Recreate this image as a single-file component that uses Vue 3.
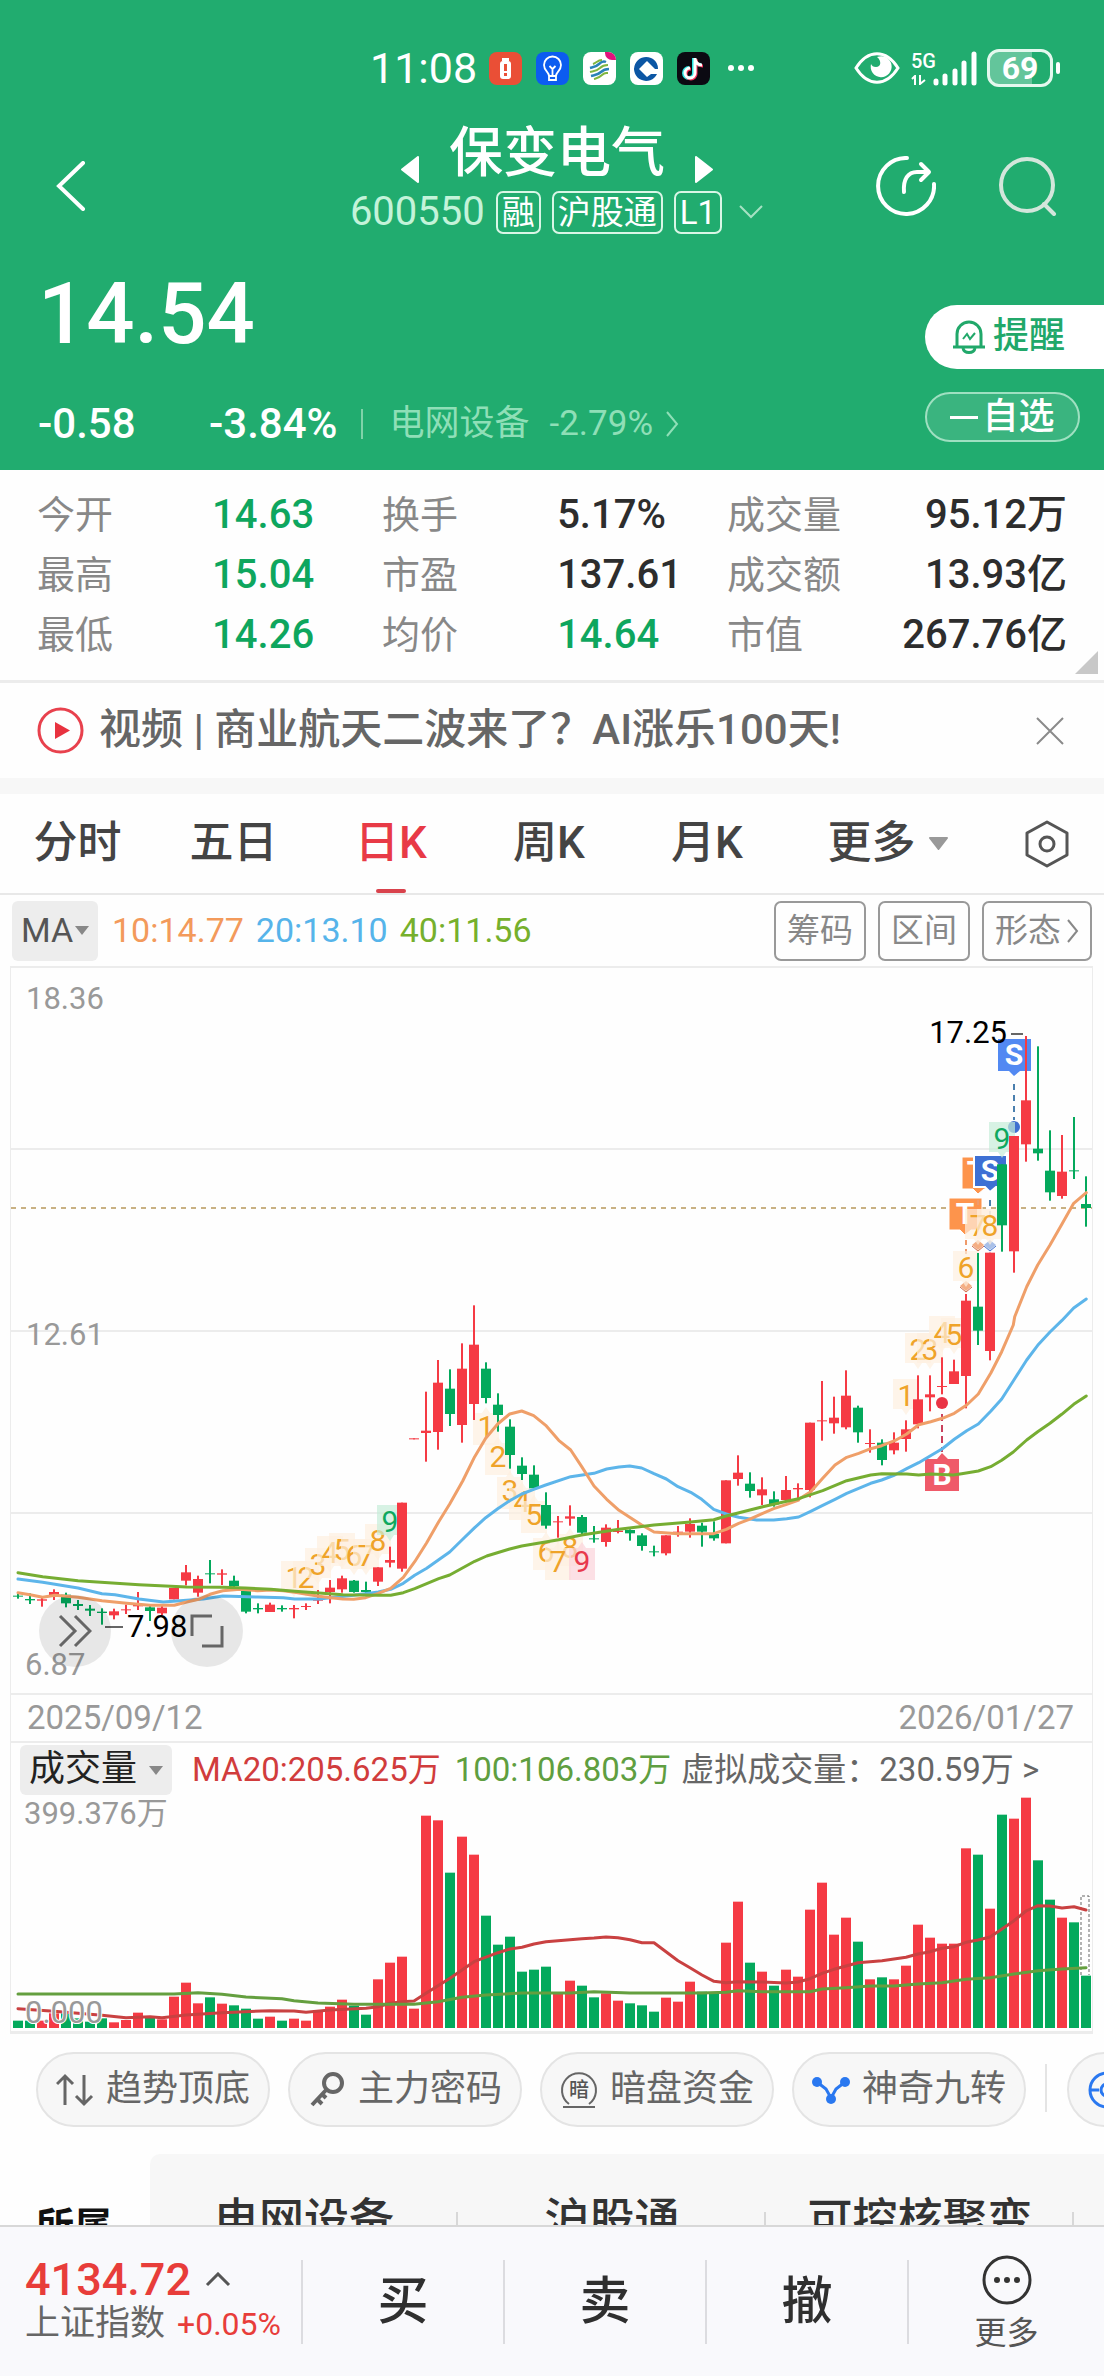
<script setup>
const stats = [
  [['今开', '14.63', 'down'], ['换手', '5.17%', ''], ['成交量', '95.12万', '']],
  [['最高', '15.04', 'down'], ['市盈', '137.61', ''], ['成交额', '13.93亿', '']],
  [['最低', '14.26', 'down'], ['均价', '14.64', 'down'], ['市值', '267.76亿', '']],
]
const periods = ['分时', '五日', '日K', '周K', '月K']
const activePeriod = '日K'
const concepts = ['电网设备', '沪股通', '可控核聚变']
const trades = ['买', '卖', '撤']

// Candles: colour, high, body top, body bottom, low.
// Values are thirds of a chart unit, counted down from each group's base line.
const groups = [
  [1260, `g 1000 1007 1010 1016,g 1000 1017 1021 1032,r 1010 1018 1022 1040,r 988 996 1005 1020,g 998 1004 1030 1042,g 1020 1032 1038 1050,g 1035 1046 1052 1068,g 1045 1055 1059 1094,r 1046 1054 1066 1078,r 1034 1048 1051 1062,r 996 1035 1039 1050,g 1038 1042 1053 1083,r 1035 1043 1060 1066,r 984 984 1018 1018,r 915 937 962 976,r 947 957 998 1010,g 900 940 943 970,r 928 940 944 975,g 947 962 978 985,g 993 993 1055 1060,g 1030 1044 1048 1060,r 1028 1034 1056 1056,g 1036 1044 1048 1055,r 1035 1044 1048 1075,r 1030 1038 1041 1050,r 990 1014 1022 1032,r 960 983 996 1030,r 947 955 988 998,g 960 962 996 998,g 965 990 996 1000,r 922 922 965 978,r 860 900 908 922,r 728 728 926 935,r 535 535 538 538,r 395 512 519 605,r 300 368 516 569,g 328 386 462 498,r 250 326 495 548,r 136 254 432 480,g 307 326 414 430,g 400 434 465 515,g 478 500 585 626,g 592 617 642 660,g 616 644 685 685,g 697 735 797 806,r 768 784 787 833,r 736 769 776 797,g 765 771 818 828,g 798 835 838 848,r 793 803 846 860,r 780 812 816 820,g 808 810 820 842,g 820 826 858 872,g 857 874 877 889,r 826 826 880 886,r 798 815 818 830,r 775 792 815 833,g 788 797 815 860,g 784 822 835 842,r 661 661 850 850,r 586 638 657 677,g 637 671 693 713,r 652 688 706 735,g 694 718 733 740`],
  [1300, `r 528 570 600 602,r 550 564 568 595,r 368 368 570 592,r 243 361 364 422,r 290 353 370 401,r 211 287 382 388,g 317 323 397 428,r 388 429 432 458,g 418 428 480 496,r 397 428 451 463,r 361 388 417 455,r 226 298 373 385,r 226 283 292 334,r 172 258 261 283,r 179 214 252 252,r -18 2 228 325,g -141 20 92 135,r -142 -142 153 181`],
  [980, `g 553 553 736 815,r 468 468 814 878,r 168 361 493 545,g 199 506 520 542,g 451 572 637 662,r 465 575 648 656,g 411 571 574 597,g 589 672 684 740`],
]
const candles = groups
  .flatMap(([base, rows]) => rows.split(',').map((row) => {
    const [c, ...v] = row.split(' ')
    const [high, top, bottom, low] = v.map((n) => base + n / 3)
    return { c, high, top, bottom, low }
  }))
  .map((k, i) => ({ ...k, x: 18 + i * 12 }))

const line = (offset, base, pts) =>
  pts.split(' ').map((p) => {
    const [x, y] = p.split(',')
    return `${(offset + x / 3).toFixed(1)},${(base + y / 3).toFixed(1)}`
  })
const averages = [
  {
    name: 'ma20', pts: [
      ...line(0, 1260, '54,957 128,967 234,984 306,1001 345,1004 417,1017 490,1026 560,1021 610,1017 668,1008 773,1011 850,1013 884,1017 957,1017 1061,1006 1135,996 1172,988'),
      ...line(400, 1260, '10,970 44,946 80,925 116,899 149,876 188,838 224,803 257,773 293,746 329,722 365,702 401,688 437,675 512,650 582,640 620,627 657,621 689,618 725,624 762,641 799,657 834,680 872,697 905,718 941,748 979,762 1016,772 1070,780 1121,780 1160,776'),
      ...line(780, 1300, '20,656 56,651 92,634 128,616 165,598 200,580 272,550 305,540 344,525 380,506 416,488 487,446 523,418 560,392 595,372 632,334 665,297 704,236 740,180 773,136 810,96 845,62 881,24 919,-3'),
    ],
  },
  {
    name: 'ma10', pts: [
      ...line(0, 1260, '54,998 90,1004 128,1012 165,1006 234,1012 306,1022 380,1030 450,1036 523,1036 560,1026 596,1018 630,1003 668,992 720,988 773,992 812,990 850,992 884,997 920,1003 957,1009 992,1013 1029,1017 1061,1018 1097,1013 1135,1000 1172,985'),
      ...line(400, 1260, '10,952 44,905 80,848 116,785 149,732 188,663 224,590 257,535 293,492 329,462 365,453 401,467 437,496 476,541 512,570 545,620 582,678 620,718 657,751 689,772 725,795 762,816 834,821 941,821 979,808 1016,790 1048,778 1088,760 1121,746 1160,733 1196,720'),
      ...line(780, 1300, '56,598 92,575 128,535 165,495 200,472 236,460 272,446 305,437 344,422 380,402 416,374 452,365 487,355 523,340 560,315 595,282 632,220 665,155 700,75'),
      ...line(780, 980, '704,1010 740,920 773,855 810,795 848,728 881,670 919,638'),
    ],
  },
  {
    name: 'ma40', pts: [
      ...line(0, 1260, '54,938 128,950 234,962 417,974 560,981 668,982 736,984 812,988 884,994 957,999 1029,1004 1135,1006 1172,1006'),
      ...line(400, 1260, '10,998 44,986 116,956 149,945 224,904 260,888 329,867 365,858 476,839 545,825 657,808 762,795 872,786 941,779 979,768 1088,740 1160,724'),
      ...line(780, 1300, '20,604 56,596 128,572 200,542 272,525 305,521 380,522 416,525 452,522 520,525 545,521 595,513 632,500 665,481 700,456 740,420 773,395 810,370 845,343 881,313 919,288'),
    ],
  },
].map((a) => ({ ...a, pts: a.pts.join(' ') }))

// Nine-turn counters: candle index, digit, baseline, side of the candle, tone
const counts = [
  [23, 1, 1588, 'up'], [24, 2, 1588, 'up'], [25, 3, 1575, 'up'], [26, 4, 1563, 'up'], [27, 5, 1560, 'up'],
  [28, 6, 1566, 'up'], [29, 7, 1566, 'up'], [30, 8, 1551, 'up'], [31, 9, 1532, 'up', 'sell'],
  [39, 1, 1437, 'low'], [40, 2, 1467, 'low'], [41, 3, 1501, 'low'], [42, 4, 1512, 'low'], [43, 5, 1525, 'low'],
  [44, 6, 1562, 'low'], [46, 8, 1558, 'low'], [45, 7, 1572, 'low'], [47, 9, 1572, 'low', 'buy'],
  [74, 1, 1406, 'up'], [75, 2, 1360, 'up'], [76, 3, 1360, 'up'], [77, 4, 1343, 'up'], [78, 5, 1345, 'up'],
  [79, 6, 1278, 'up'], [80, 7, 1236, 'up'], [81, 8, 1236, 'up'], [82, 9, 1149, 'up', 'sell'],
].map(([i, n, y, side, tone = 'run']) => ({ x: 18 + i * 12, n, y, side, tone }))
const countBox = ({ x, y, side }) => side === 'up'
  ? `M${x - 13} ${y - 27}h26v30h-9l-4 6l-4-6h-9z`
  : `M${x - 13} ${y + 8}v-32h9l4-6l4 6h9v32z`

const volumes = `g902 g902 r902 r880 g880 g895 g905 g895 r907 r900 r878 g890 r898 r830 r788 r850 g832 r851 g856 g866 g896 r890 g902 r896 r902 r875 r860 r839 g857 g884 r778 r728 r710 r866 r287 r301 g458 r350 r404 g587 g674 g650 g755 g749 g740 r820 r782 g797 g832 r820 r842 g850 g856 g875 r833 r845 r785 g815 g822 r668 r545 g728 r755 g797 r749 r770 r569 r488 r644 r593 g665 r778 g772 r778 r737 r614 r653 r671 r671 r385 g404 r566 g284 r296 r233 g421 g539 r593 g607 g767`
  .split(' ')
  .map((v, i) => ({ c: v[0], x: 18 + i * 12, y: 1720 + v.slice(1) / 3 }))
const volLine = (pts) => pts.split(' ').map((p) => {
  const [i, y] = p.split(',')
  return `${18 + i * 12},${(1720 + y / 3).toFixed(1)}`
}).join(' ')
const vol20 = volLine('0,866 3,874 7,886 9,893 11,890 12,893 14,885 17,878 21,872 23,873 24,877 26,870 29,865 30,860 31,850 32,845 33,843 34,820 36,775 38,725 40,698 41,687 42,682 43,672 44,665 46,659 47,656 48,654 49,651 50,653 51,659 52,668 53,668 54,695 55,722 56,743 57,765 58,784 59,788 60,785 62,786 64,789 65,786 66,776 67,760 68,748 69,738 70,728 72,722 73,717 74,712 75,702 76,695 77,685 78,680 79,667 80,660 81,651 82,627 83,602 84,573 85,557 86,558 87,564 88,560 89,570')
const vol100 = volLine('0,822 13,822 15,818 17,823 19,831 22,836 23,842 25,849 28,853 31,853 33,853 35,845 37,832 39,825 42,819 46,819 48,815 51,819 57,819 59,817 60,812 62,815 66,815 67,807 69,803 71,798 73,798 75,792 77,788 79,778 81,773 83,762 85,752 87,747 89,743')
</script>

<template>
  <div class="app">
    <header class="hero">
      <div class="status">
        <span class="clock">11:08</span>
        <div class="apps">
          <svg viewBox="0 0 33 33"><rect width="33" height="33" rx="8" fill="#ea4f36" /><rect x="13" y="6" width="7" height="3" fill="#fff" /><rect x="11" y="9" width="11" height="18" rx="3" fill="#fff" /><path d="M16.500 12v7M16.500 21v3" stroke="#ea4f36" stroke-width="3" /></svg>
          <svg viewBox="0 0 33 33"><rect width="33" height="33" rx="8" fill="#0c5cf0" /><path d="M13 24c0-4-5-5-5-11a8.500 8.500 0 0 1 17 0c0 6-5 7-5 11zM13 24v4h7v-4M16.500 23v-6l-3-3M16.500 17l3-3" fill="none" stroke="#fff" stroke-width="1.800" /></svg>
          <svg viewBox="0 0 33 33"><rect width="33" height="33" rx="8" fill="#fff" /><path d="M7 16c4-1 6-1 9-4s5-3 7-2M8 24c4-1 7-1 10-4s5-3 8-3" fill="none" stroke="#2a82b8" stroke-width="2.500" /><path d="M7 20c4-1 7-1 10-4s5-3 8-3M11 27c4-1 5-1 8-4s4-2 6-2M10 12c3-1 5-4 9-4" fill="none" stroke="#7fb53f" stroke-width="2" /><path d="M22 0h3a8 8 0 0 1 8 8h-4a7 7 0 0 1-7-7z" fill="#e3107c" /></svg>
          <svg viewBox="0 0 33 33"><rect width="33" height="33" rx="8" fill="#fff" /><path d="M21 6A12 12 0 1 0 27 22h-6l-4 3-8-8 8-8 8 8h3a12 12 0 0 0-5-10z" fill="#0b56a4" /><path d="M16.500 10l6 6.500-6 6.500-6-6.500z" fill="#fff" /></svg>
          <svg viewBox="0 0 33 33"><rect width="33" height="33" rx="8" fill="#0b0a12" /><path d="M17 6v15a5 5 0 1 1-5-5M17 7c1 4 3 6 7 6" fill="none" stroke="#2fe6e6" stroke-width="4" /><path d="M19 7v15a5 5 0 1 1-5-5M19 8c1 4 3 6 7 6" fill="none" stroke="#f4335c" stroke-width="3" /><path d="M18 6v15a5 5 0 1 1-5-5M18 7c1 4 3 6 7 6" fill="none" stroke="#fff" stroke-width="3" /></svg>
          <svg class="dots" viewBox="0 0 28 8"><circle cx="4" cy="4" r="3" /><circle cx="14" cy="4" r="3" /><circle cx="24" cy="4" r="3" /></svg>
        </div>
        <div class="signal">
          <svg width="46" height="36" viewBox="0 0 46 36"><path d="M2 18C14-1 32-1 44 18 32 37 14 37 2 18z" fill="none" stroke="#fff" stroke-width="3" /><path d="M23 7c5 4 4 10-1 10-3 0-4-1-5-3a10.500 10.500 0 1 0 6-7z" fill="#fff" /></svg>
          <div class="net"><b>5G</b><svg width="15" height="10" viewBox="0 0 15 10"><path d="M1 4l3-3v9M9 0v9l5-4" fill="none" stroke="#fff" stroke-width="2" /></svg></div>
          <svg width="46" height="40" viewBox="0 0 46 40"><path d="M4 35v-2M13 35v-7M23 35V23M32 35V15M42 35V6" stroke="#fff" stroke-width="5" stroke-linecap="round" /></svg>
          <div class="battery">69</div>
        </div>
      </div>

      <nav class="nav">
        <button class="plain" aria-label="返回"><svg width="30" height="50" viewBox="0 0 30 50"><path d="M27 2L3 25l24 23" fill="none" stroke="#fff" stroke-width="4" stroke-linecap="round" /></svg></button>
        <div class="stock">
          <div class="name">
            <button class="plain" aria-label="上一只"><svg width="18" height="27" viewBox="0 0 18 27"><path d="M17 1v25L1 13.500z" fill="#fff" stroke="#fff" stroke-width="2" stroke-linejoin="round" /></svg></button>
            <h1>保变电气</h1>
            <button class="plain" aria-label="下一只"><svg width="18" height="27" viewBox="0 0 18 27"><path d="M1 1v25l16-12.500z" fill="#fff" stroke="#fff" stroke-width="2" stroke-linejoin="round" /></svg></button>
          </div>
          <div class="code">
            <span class="num">600550</span><span class="badge">融</span><span class="badge">沪股通</span><span class="badge">L1</span>
            <svg width="26" height="16" viewBox="0 0 26 16"><path d="M2 2l11 11L24 2" fill="none" stroke="#a6e2c3" stroke-width="2" /></svg>
          </div>
        </div>
        <div class="actions">
          <button class="plain" aria-label="分享"><svg width="60" height="60" viewBox="0 0 60 60"><g fill="none" stroke="#fff" stroke-width="4" stroke-linecap="round" stroke-linejoin="round"><path d="M31 2a28 28 0 1 0 27 26" /><path d="M28 36c-1-13 4-20 13-20h11M45 8l8 8-8 8" /></g></svg></button>
          <button class="plain" aria-label="搜索"><svg width="60" height="60" viewBox="0 0 60 60"><g fill="none" stroke="#d3e6db" stroke-width="4"><circle cx="29" cy="29" r="26" /><path d="M46 48l10 10" stroke-linecap="round" /></g></svg></button>
        </div>
      </nav>

      <div class="quote">
        <div class="figures">
          <div class="price">14.54</div>
          <div class="change">
            <span class="delta">-0.58</span><span class="rate">-3.84%</span>
            <a class="sector" href="#sector"><span>电网设备</span><span class="pct">-2.79%</span><svg width="14" height="26" viewBox="0 0 14 26"><path d="M2 1l10 12L2 25" fill="none" stroke="#8fdfb7" stroke-width="2" /></svg></a>
          </div>
        </div>
        <div class="side">
          <button class="remind"><svg width="34" height="36" viewBox="0 0 34 36"><g fill="none" stroke="#21a86a" stroke-width="3"><path d="M5 27V15a12 12 0 0 1 24 0v12M1 28h32" /><path d="M11 29c1 6 11 6 12 0" /><path d="M11 20l4-5 3 5 5-6" stroke-width="2" /></g></svg>提醒</button>
          <button class="watch"><i></i>自选</button>
        </div>
      </div>
    </header>

    <section class="stats">
      <table>
        <tbody>
          <tr v-for="(row, r) in stats" :key="r">
            <template v-for="[label, value, tone] in row" :key="label"><th scope="row">{{ label }}</th><td :class="tone">{{ value }}</td></template>
          </tr>
        </tbody>
      </table>
      <svg class="corner" width="23" height="23" viewBox="0 0 23 23"><path d="M23 0v23H0z" fill="#c8c8c8" /></svg>
    </section>

    <section class="news">
      <svg width="47" height="47" viewBox="0 0 47 47"><circle cx="23.500" cy="23.500" r="21.500" fill="none" stroke="#e8414d" stroke-width="3" /><path d="M18 15v17l15-8.500z" fill="#e8323f" /></svg>
      <a href="#news">视频 | 商业航天二波来了？AI涨乐100天!</a>
      <button class="plain" aria-label="关闭"><svg width="28" height="28" viewBox="0 0 28 28"><path d="M1 1l26 26M27 1L1 27" stroke="#8a8a8a" stroke-width="2" /></svg></button>
    </section>

    <nav class="tabs">
      <button v-for="p in periods" :key="p" :class="{ on: p === activePeriod }">{{ p }}</button>
      <button>更多<svg width="21" height="13" viewBox="0 0 21 13"><path d="M2 1h17l-8.500 11z" fill="#999" stroke="#999" stroke-width="2" stroke-linejoin="round" /></svg></button>
      <button aria-label="设置"><svg width="44" height="48" viewBox="0 0 44 48"><g fill="none" stroke="#555" stroke-width="3" stroke-linejoin="round"><path d="M22 2l20 11v22L22 46 2 35V13z" /><circle cx="22" cy="24" r="7" /></g></svg></button>
    </nav>

    <section class="averages">
      <button class="chip">MA<svg width="14" height="9" viewBox="0 0 14 9"><path d="M0 0h14L7 9z" fill="#888" /></svg></button>
      <span class="v10">10:14.77</span><span class="v20">20:13.10</span><span class="v40">40:11.56</span>
      <div class="tools">
        <button>筹码</button><button>区间</button>
        <button>形态<svg width="13" height="24" viewBox="0 0 13 24"><path d="M2 1l9 11-9 11" fill="none" stroke="#888" stroke-width="2" /></svg></button>
      </div>
    </section>

    <section class="frame">
      <div class="plot">
        <svg class="chart" viewBox="11 968 1081 773" role="img" aria-label="日K线">
          <g class="grid"><path d="M11 1149H1092M11 1331H1092M11 1513H1092M11 1694H1092" /></g>
          <g class="axis">
            <text x="26" y="1009">18.36</text>
            <text x="26" y="1345">12.61</text>
            <text x="25" y="1675">6.87</text>
          </g>
          <g class="date">
            <text x="27" y="1729">2025/09/12</text>
            <text x="1074" y="1729" text-anchor="end">2026/01/27</text>
          </g>
          <path d="M11 1208H1092" stroke="#c9b183" stroke-width="2" stroke-dasharray="5 5" />

          <g class="mark">
            <path class="t" d="M962 1157h33v32h-11l-6 5-5-5h-11z" />
            <text x="976" y="1182">T</text>
            <path class="t" d="M949 1198h33v32h-11l-6 5-5-5h-11z" />
            <text x="965" y="1224">T</text>
            <path class="s deep" d="M974 1155h33v32h-11l-6 5-5-5h-11z" />
            <text x="990" y="1181">S</text>
            <path class="s" d="M998 1039h33v32h-11l-6 5-5-5h-11z" />
            <text x="1014" y="1065">S</text>
            <path d="M1014 1084v36M990 1200v16" stroke="#4a7fae" stroke-width="2" stroke-dasharray="6 5" />
            <path d="M966 1240v16M978 1200v10" stroke="#ef9a6a" stroke-width="2" stroke-dasharray="5 4" />
            <circle cx="1014" cy="1127" r="6" fill="#3f6fd0" />
            <path class="b" d="M925 1459h12l5-6 6 6h11v32h-34z" />
            <text x="942" y="1485">B</text>
            <path d="M942 1414v38" stroke="#c9415c" stroke-width="2" stroke-dasharray="7 4" />
            <circle cx="942" cy="1403" r="6" fill="#ea3344" />
            <path d="M966 1281l6 5-6 5-6-5zM978 1240l6 5-6 5-6-5z" fill="#f4ae84" />
            <path d="M960 1287l6 5 6-5M972 1246l6 5 6-5" fill="none" stroke="#d06a4a" stroke-width="1" />
            <path d="M990 1240l6 5-6 5-6-5z" fill="#a9c0e8" />
            <path d="M984 1246l6 5 6-5" fill="none" stroke="#3f6fd0" stroke-width="1" />
          </g>

          <g v-for="c in counts" :key="c.x" class="count" :class="c.tone">
            <path :d="countBox(c)" />
            <text :x="c.x" :y="c.y">{{ c.n }}</text>
          </g>

          <g v-for="k in candles" :key="k.x" :class="k.c">
            <rect :x="k.x - 1" :y="k.high" width="2" :height="k.low - k.high" />
            <rect :x="k.x - 5" :y="k.top" width="10" :height="k.bottom - k.top" />
          </g>
          <polyline v-for="a in averages" :key="a.name" :class="a.name" :points="a.pts" />

          <path d="M105 1627h18M1011 1034h12" stroke="#666" stroke-width="2" />
          <g class="extreme">
            <text x="127" y="1637">7.98</text>
            <text x="1007" y="1043" text-anchor="end">17.25</text>
          </g>
        </svg>
        <button class="round first" aria-label="展开"><svg width="34" height="34" viewBox="0 0 34 34"><path d="M2 2l15 15L2 32M17 2l15 15-15 15" fill="none" stroke="#666" stroke-width="3" /></svg></button>
        <button class="round second" aria-label="全屏"><svg width="34" height="34" viewBox="0 0 34 34"><path d="M2 22V2h20M32 12v20H12" fill="none" stroke="#666" stroke-width="3" /></svg></button>
      </div>

      <div class="volhead">
        <button class="chip">成交量<svg width="14" height="9" viewBox="0 0 14 9"><path d="M0 0h14L7 9z" fill="#888" /></svg></button>
        <span class="m20">MA20:205.625万</span><span class="m100">100:106.803万</span><a href="#volume">虚拟成交量：230.59万 &gt;</a>
      </div>

      <svg class="chart" viewBox="11 1797 1081 234" role="img" aria-label="成交量">
        <rect v-for="v in volumes" :key="v.x" :class="v.c" :x="v.x - 5" :y="v.y" width="10" :height="2028 - v.y" />
        <path d="M1081 1975v-79h8v79" fill="none" stroke="#666" stroke-dasharray="3 2" />
        <polyline class="vma20" :points="vol20" />
        <polyline class="vma100" :points="vol100" />
        <g class="axis">
          <text x="24" y="1824">399.376万</text>
          <text class="halo" x="25" y="2023">0.000</text>
        </g>
      </svg>
    </section>

    <section class="shortcuts">
      <button><svg viewBox="0 0 38 38"><path d="M9 34V5M1 13l8-8 8 8M28 4v29M20 25l8 8 8-8" fill="none" stroke="#666" stroke-width="3" /></svg>趋势顶底</button>
      <button><svg viewBox="0 0 38 38"><g fill="none" stroke="#666" stroke-width="4"><circle cx="25" cy="12" r="9" /><path d="M19 18L4 34M9 28l5 5M14 23l4 4" /></g></svg>主力密码</button>
      <button><svg viewBox="0 0 38 38"><path d="M9 33a17 17 0 1 1 20 0M3 36h32" fill="none" stroke="#666" stroke-width="2" /><text x="19" y="26" text-anchor="middle" font-size="20" font-weight="500" fill="#555">暗</text></svg>暗盘资金</button>
      <button><svg viewBox="0 0 38 38"><path d="M5 11l9 7 5 9 5-9 9-7" fill="none" stroke="#2a78f0" stroke-width="3" /><g fill="#2a78f0"><circle cx="5" cy="11" r="5" /><circle cx="33" cy="11" r="5" /><circle cx="19" cy="28" r="5" /></g></svg>神奇九转</button>
      <i></i>
      <button aria-label="更多指标"><svg viewBox="0 0 38 38"><g fill="none" stroke="#2a78f0" stroke-width="3"><circle cx="19" cy="19" r="17" /><path d="M2 19h9M19 2v9M19 27v9" /><circle cx="19" cy="19" r="6" /></g></svg></button>
    </section>

    <section class="concepts">
      <h2>所属</h2>
      <div class="panel"><a v-for="c in concepts" :key="c" href="#concept">{{ c }}</a></div>
    </section>

    <footer class="dock">
      <div class="index">
        <div class="points">4134.72<svg width="26" height="15" viewBox="0 0 26 15"><path d="M2 13L13 2l11 11" fill="none" stroke="#555" stroke-width="3" /></svg></div>
        <div class="label">上证指数<span>+0.05%</span></div>
      </div>
      <button v-for="t in trades" :key="t">{{ t }}</button>
      <button class="more"><svg width="50" height="50" viewBox="0 0 50 50"><circle cx="25" cy="25" r="23" fill="none" stroke="#333" stroke-width="3" /><g fill="#333"><circle cx="15" cy="25" r="3" /><circle cx="25" cy="25" r="3" /><circle cx="35" cy="25" r="3" /></g></svg>更多</button>
    </footer>
  </div>
</template>

<style>
body { margin: 0; background: #fff; }
</style>

<style scoped>
.app { font-family: Roboto, "Noto Sans CJK SC", sans-serif; line-height: 1.2; color: #333; overflow: hidden; background: #fefefe; }
.app *, .app *::before, .app *::after { box-sizing: border-box; }
button { font: inherit; color: inherit; background: none; border: 0; padding: 0; margin: 0; }
a { color: inherit; text-decoration: none; }
svg { display: block; flex: none; }
h1, h2 { margin: 0; font-weight: 500; }
.plain { display: flex; }

.hero { background: #21ac6f; color: #fff; padding-top: 48px; }
.status { display: flex; align-items: center; height: 40px; padding: 0 44px 0 370px; }
.clock { font-size: 43px; line-height: 40px; margin-right: 12px; }
.apps { display: flex; align-items: center; gap: 14px; }
.apps svg { width: 33px; height: 33px; }
.apps .dots { width: 28px; height: 8px; margin-left: 3px; fill: #fff; }
.signal { display: flex; align-items: center; gap: 4px; margin-left: auto; }
.net { display: flex; flex-direction: column; gap: 4px; margin: 0 -8px 0 7px; }
.net b { font-size: 20px; line-height: 20px; font-weight: 500; }
.battery { position: relative; width: 66px; height: 38px; margin: 0 7px 0 5px; border: 3px solid #e4f8ee; border-radius: 12px; background: linear-gradient(90deg, #63c59b 70%, #21ac6f 70%); font-size: 32px; line-height: 32px; font-weight: 700; text-align: center; }
.battery::after { content: ""; position: absolute; right: -10px; top: 10px; width: 4px; height: 12px; border-radius: 2px; background: #fff; }

.nav { display: grid; grid-template-columns: 1fr auto 1fr; align-items: center; padding: 36px 46px 0 56px; }
.stock { display: flex; flex-direction: column; align-items: center; gap: 7px; }
.name { display: flex; align-items: center; gap: 30px; }
.name .plain { margin-top: 32px; }
.name h1 { font-size: 54px; line-height: 56px; }
.code { display: flex; align-items: center; gap: 11px; height: 44px; }
.code .num { font-size: 40px; color: #c3f3d9; }
.badge { height: 43px; padding: 0 4px; border: 2px solid #d9f6e6; border-radius: 7px; font-size: 33px; line-height: 39px; }
.code svg { margin-left: 5px; }
.actions { display: flex; justify-content: flex-end; gap: 62px; padding-top: 14px; }
.nav > .plain { padding-top: 14px; }

.quote { display: flex; justify-content: space-between; height: 236px; }
.figures { padding: 40px 0 0 38px; }
.price { font-size: 85px; line-height: 80px; font-weight: 500; }
.change { display: flex; align-items: center; margin-top: 48px; height: 44px; font-size: 42px; font-weight: 500; }
.delta { width: 171px; }
.rate { padding-right: 24px; }
.sector { display: flex; align-items: center; height: 30px; padding-left: 26px; border-left: 2px solid #7fd3a9; font-size: 35px; font-weight: 400; color: #8fdfb7; }
.pct { margin: 0 12px 0 20px; }
.side { padding-top: 71px; width: 179px; }
.remind { display: flex; align-items: center; gap: 7px; width: 179px; height: 64px; padding-left: 27px; border-radius: 32px 0 0 32px; background: #fff; color: #21a86a; font-size: 36px; font-weight: 500; }
.watch { display: flex; align-items: center; justify-content: center; gap: 4px; width: 155px; height: 50px; margin-top: 23px; border: 2px solid #9fe0c1; border-radius: 25px; background: #3ab47f; font-size: 36px; line-height: 40px; font-weight: 500; }
.watch i { width: 28px; height: 3px; background: #fff; }

.stats { position: relative; padding: 15px 37px; border-bottom: 3px solid #ececec; }
table { width: 100%; table-layout: fixed; border-collapse: collapse; }
tr { height: 60px; }
th, td { padding: 0; text-align: left; font-size: 38px; line-height: 60px; white-space: nowrap; }
th { width: 17%; font-weight: 400; color: #888; }
td { width: 16.5%; font-size: 40px; font-weight: 500; color: #2d2d2d; }
td:last-child { text-align: right; width: 21%; }
th:nth-child(5) { width: 12%; }
td.down { color: #0ea65e; }
.corner { position: absolute; right: 6px; bottom: 6px; }

.news { display: flex; align-items: center; height: 111px; padding: 0 40px 0 37px; border-bottom: 16px solid #f7f7f7; font-size: 42px; color: #666; }
.news a { flex: 1; margin-left: 15px; font-weight: 500; }

.tabs { display: grid; grid-template-columns: 155fr 157fr 158fr 158fr 158fr 204fr 114fr; height: 101px; border-bottom: 2px solid #e8e8e8; }
.tabs button { position: relative; display: flex; align-items: center; justify-content: center; gap: 12px; font-size: 44px; font-weight: 500; color: #444; }
.tabs .on { color: #e83a46; }
.tabs .on::after { content: ""; position: absolute; bottom: 0; width: 30px; height: 4px; border-radius: 2px; background: #d9424c; }

.averages { display: flex; align-items: center; gap: 12px; height: 71px; padding: 0 12px; font-size: 34px; }
.chip { display: flex; align-items: center; justify-content: center; background: #ededed; border-radius: 6px; }
.averages .chip { width: 86px; height: 60px; gap: 2px; color: #555; margin-right: 2px; }
.v10 { color: #f39a5b; }
.v20 { color: #56b4ea; }
.v40 { color: #76b02c; }
.tools { display: flex; gap: 12px; margin-left: auto; }
.tools button { display: flex; align-items: center; gap: 5px; height: 60px; padding: 0 11px; border: 2px solid #999; border-radius: 7px; font-size: 33px; color: #888; }

.frame { margin: 0 11px 0 10px; border: solid #ececec; border-width: 2px 1px 3px; }
.plot { position: relative; }
.chart { width: 100%; height: auto; overflow: visible; }
.chart polyline { fill: none; stroke-width: 3; stroke-linejoin: round; stroke-linecap: round; }
.grid path { stroke: #ececec; stroke-width: 2; }
.axis text { font-size: 31px; fill: #999; }
.axis .halo { stroke: #fff; stroke-width: 2; paint-order: stroke; }
.date text { font-size: 33px; fill: #999; }
.extreme text { font-size: 31px; fill: #000; }
.r { fill: #f53a44; }
.g { fill: #04a95c; }
.chart .ma10 { stroke: #ef9f69; }
.chart .ma20 { stroke: #5db5ea; }
.chart .ma40 { stroke: #76ad32; }
.chart .vma20 { stroke: #c94141; }
.chart .vma100 { stroke: #649f3f; }
.count text { font-size: 30px; text-anchor: middle; }
.count path { fill: #fef0df; fill-opacity: 0.7; }
.run text { fill: #efa329; }
.sell path { fill: #c6ecd9; }
.sell text { fill: #0fa85f; }
.buy path { fill: #fbd3da; }
.buy text { fill: #e8384c; }
.mark text { font-size: 30px; font-weight: 700; text-anchor: middle; fill: #fff; }
.mark .t { fill: #fd944c; stroke: #fff; }
.mark .s { fill: #5289f2; }
.mark .deep { fill: #3e70d4; stroke: #fff; stroke-width: 2; }
.mark .b { fill: #ef5a69; }
.round { position: absolute; bottom: 74px; display: flex; align-items: center; justify-content: center; width: 72px; height: 72px; border-radius: 50%; background: rgba(0, 0, 0, 0.09); }
.first { left: 28px; }
.second { left: 160px; }

.volhead { display: flex; align-items: center; height: 56px; padding: 0 0 0 9px; border-top: 2px solid #ececec; font-size: 33px; white-space: nowrap; color: #666; }
.volhead .chip { width: 152px; height: 50px; gap: 12px; font-size: 36px; color: #222; }
.m20 { color: #d13c3c; margin: 0 14px 0 20px; }
.m100 { color: #5f9e40; margin-right: 10px; }

.shortcuts { display: flex; gap: 18px; padding: 18px 0 27px 36px; overflow: hidden; }
.shortcuts button { flex: none; display: flex; align-items: center; justify-content: center; gap: 12px; width: 234px; height: 75px; border: 2px solid #e4e4e4; border-radius: 38px; background: #f7f7f7; font-size: 36px; color: #666; }
.shortcuts button:last-child { justify-content: flex-start; padding-left: 19px; }
.shortcuts svg { width: 38px; height: 38px; }
.shortcuts i { flex: none; width: 2px; height: 48px; margin: 12px 2px 0 1px; background: #e4e4e4; }

.concepts { display: flex; height: 71px; overflow: hidden; }
.concepts h2 { width: 150px; padding: 50px 0 0 36px; font-size: 38px; line-height: 44px; font-weight: 700; color: #111; }
.panel { flex: 1; display: flex; overflow: hidden; padding-top: 44px; border-radius: 10px 0 0 0; background: #f7f7f7; }
.panel a { position: relative; flex: none; width: 308px; font-size: 45px; line-height: 46px; font-weight: 500; text-align: center; }
.panel a::after { content: ""; position: absolute; right: 0; top: 14px; width: 2px; height: 40px; background: #d8d8d8; }

.dock { display: grid; grid-template-columns: 301fr 202fr 202fr 202fr 197fr; align-items: center; height: 151px; border-top: 2px solid #d8d8d8; background: #f9f9fc; }
.index { padding-left: 25px; white-space: nowrap; }
.points { display: flex; align-items: center; gap: 14px; font-size: 45px; line-height: 44px; font-weight: 500; color: #e83d3a; }
.label { font-size: 35px; line-height: 44px; color: #666; }
.label span { margin-left: 12px; font-size: 32px; color: #e83d3a; }
.dock button { height: 84px; border-left: 2px solid #dcdce0; font-size: 51px; line-height: 84px; font-weight: 500; color: #2f2f2f; }
.dock .more { display: flex; flex-direction: column; align-items: center; justify-content: center; gap: 12px; font-size: 32px; line-height: 32px; font-weight: 400; color: #555; }
</style>
